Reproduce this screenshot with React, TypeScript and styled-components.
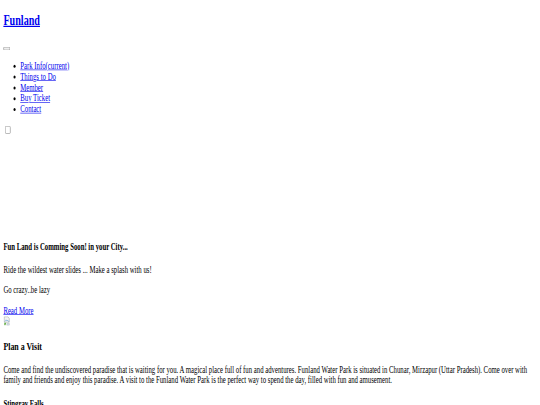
import styled, { createGlobalStyle } from "styled-components";

const navItems = [
  "Park Info(current)",
  "Things to Do",
  "Member",
  "Buy Ticket",
  "Contact",
];

const GlobalStyle = createGlobalStyle`
  html, body {
    margin: 0;
    padding: 0;
    background: #fff;
    overflow: hidden;
  }
`;

// the reference is a 1280px wide page squeezed into 540x405
const Stage = styled.div`
  width: 1280px;
  height: 675px;
  display: flow-root;
  transform: scale(0.421875, 0.6);
  transform-origin: 0 0;
  font-family: "Liberation Serif", "Times New Roman", serif;
  font-size: 16px;
  line-height: normal;
  color: #000;
`;

const Page = styled.div`
  margin: 8px;
`;

const Link = styled.a`
  color: #0000ee;
  text-decoration: underline;
  cursor: pointer;
`;

const Brand = styled.h2`
  font-size: 24px;
  font-weight: bold;
  margin: 19.92px 0;
`;

const Toggler = styled.button`
  font: inherit;
`;

const NavList = styled.ul`
  margin: 16px 0;
  padding-left: 40px;
  list-style: disc;
`;

const Slide = styled.div`
  height: 154px;
`;

const Heading = styled.h4<{ $size?: number }>`
  font-size: ${(p) => p.$size ?? 16}px;
  font-weight: bold;
  margin: ${(p) => ((p.$size ?? 16) === 16 ? 21.28 : 18.72)}px 0;
`;

const Text = styled.p`
  margin: 16px 0;
`;

const BrokenImage = () => (
  <svg width="16" height="16" viewBox="0 0 16 16">
    <path d="M2 1h9l3 3v6H2z" fill="#f4f4f4" stroke="#9aa0a6" strokeWidth="1" />
    <path d="M3.5 9l3-3 2 2 1.5-1.5 3 3" fill="none" stroke="#5b9bd5" strokeWidth="1" />
    <path d="M2 11h5l-2 4H2z" fill="#6ab04c" />
    <path d="M9 12h5v3H8z" fill="#d9e8f5" stroke="#9aa0a6" strokeWidth="0.8" />
  </svg>
);

export default function App() {
  return (
    <>
      <GlobalStyle />
      <Stage>
        <Page>
          <nav>
            <Brand>
              <Link>Funland</Link>
            </Brand>
            <div>
              <Toggler type="button">
                <span />
              </Toggler>
            </div>
            <NavList>
              {navItems.map((item) => (
                <li key={item}>
                  <Link>{item}</Link>
                </li>
              ))}
            </NavList>
            <div>
              <input type="checkbox" />
            </div>
          </nav>
          <Slide />
          <section>
            <Heading>Fun Land is Comming Soon! in your City...</Heading>
            <Text>Ride the wildest water slides ... Make a splash with us!</Text>
            <Text>Go crazy..be lazy</Text>
            <div>
              <Link>Read More</Link>
            </div>
            <div>
              <BrokenImage />
            </div>
          </section>
          <section>
            <Heading as="h3" $size={18.72}>
              Plan a Visit
            </Heading>
            <Text>
              Come and find the undiscovered paradise that is waiting for you. A
              magical place full of fun and adventures. Funland Water Park is
              situated in Chunar, Mirzapur (Uttar Pradesh). Come over with family
              and friends and enjoy this paradise. A visit to the Funland Water
              Park is the perfect way to spend the day, filled with fun and
              amusement.
            </Text>
            <Heading>Stingray Falls</Heading>
          </section>
        </Page>
      </Stage>
    </>
  );
}
